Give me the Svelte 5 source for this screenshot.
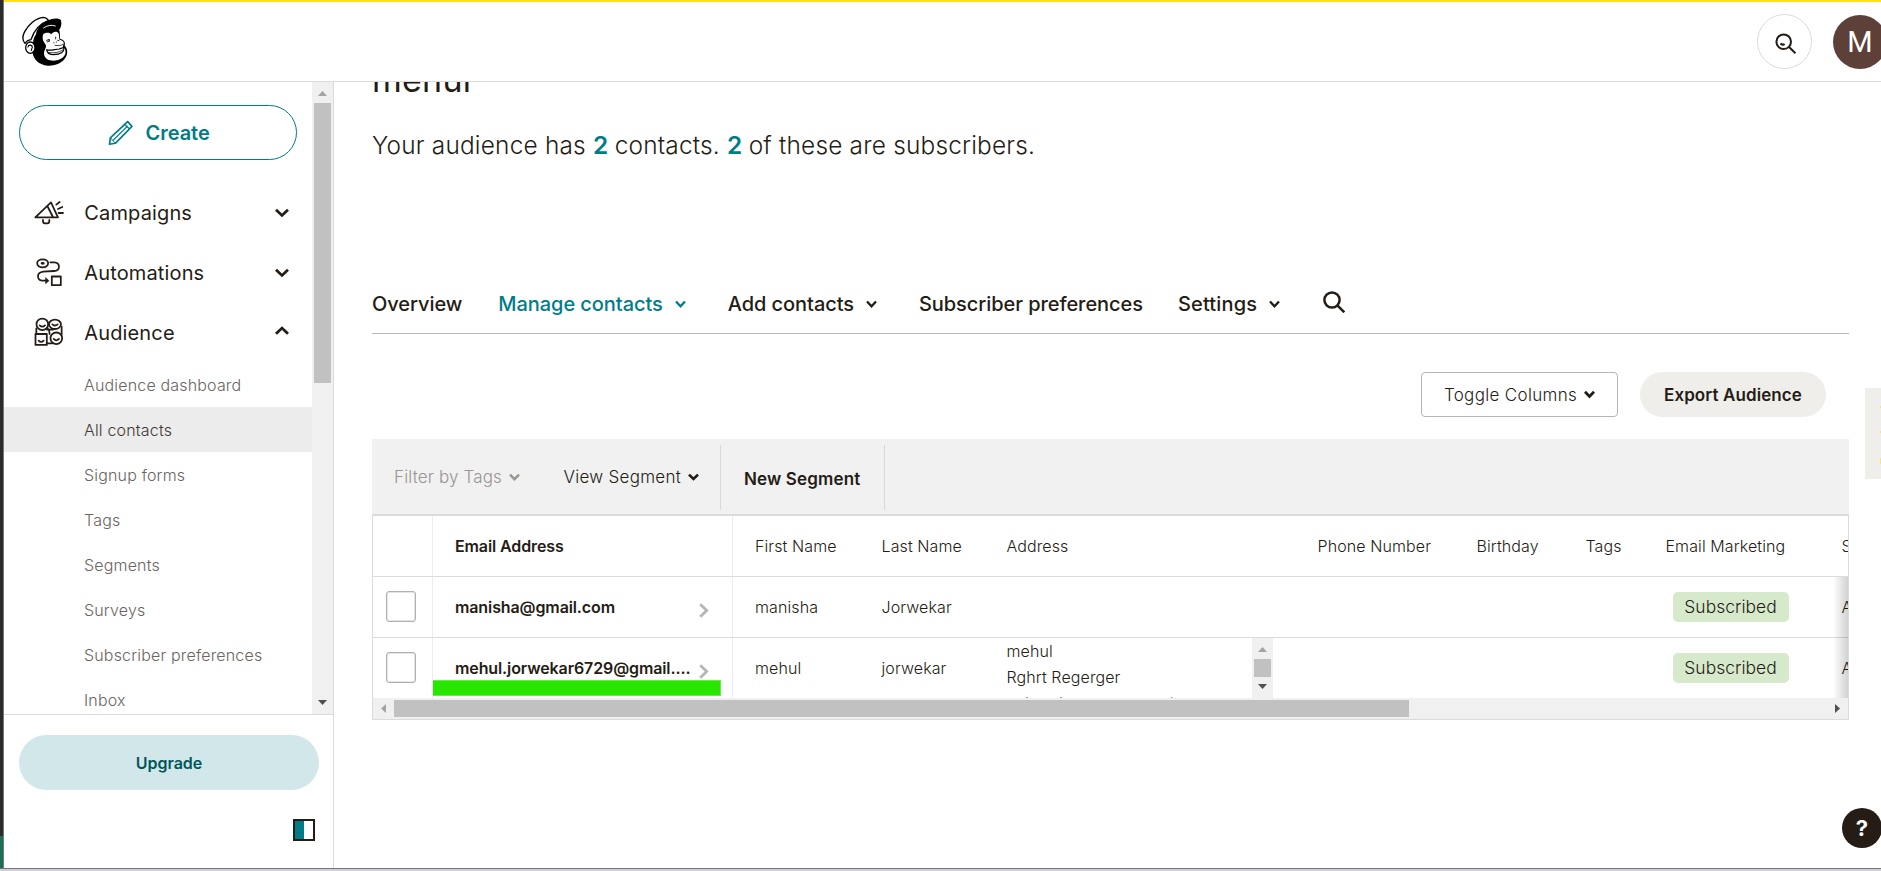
<script>
  const subItems = [
    'Audience dashboard', 'All contacts', 'Signup forms', 'Tags',
    'Segments', 'Surveys', 'Subscriber preferences', 'Inbox'
  ];
  const nav = [
    { id: 'campaigns', label: 'Campaigns' },
    { id: 'automations', label: 'Automations' },
    { id: 'audience', label: 'Audience', open: true }
  ];
  const columns = ['First Name', 'Last Name', 'Address', 'Phone Number', 'Birthday', 'Tags', 'Email Marketing', 'Source'];
  const rows = [
    { email: 'manisha@gmail.com', first: 'manisha', last: 'Jorwekar', address: [] },
    { email: 'mehul.jorwekar6729@gmail....', first: 'mehul', last: 'jorwekar', address: ['mehul', 'Rghrt Regerger'] }
  ];
</script>

{#snippet chevron(w, h, sw)}
  <svg class="chev" width={w} height={h} viewBox="0 0 {w} {h}" fill="none" stroke="currentColor" stroke-width={sw}>
    <path d="M1 {sw / 2 + 0.3}L{w / 2} {h - sw * 0.75}L{w - 1} {sw / 2 + 0.3}" />
  </svg>
{/snippet}

<div class="frame">
  <div class="middle">
    <div class="edge"><i></i></div>
    <div class="app">
      <header>
        <svg class="logo" width="50" height="53.33" viewBox="60 45 150 160" fill="none" stroke="#000" stroke-width="4" stroke-linejoin="round" stroke-linecap="round">
          <path fill="#000" stroke="none" d="M99 128C101 108 112 92 135 84L176 84C180 95 180 105 180 116C192 119 197 127 194 137C202 144 204 157 199 168C190 188 168 198 143 197C118 195 102 180 98 160Z" />
          <path fill="#fff" stroke="none" d="M130 103C138 96 150 98 154 103C159 94 172 92 176 101C179 109 176 116 179 119C189 121 193 126 191 132C189 138 188 139 190 143C198 146 198 160 194 166C185 180 165 185 150 181C132 176 128 160 136 146C140 138 138 134 133 128C127 120 127 108 130 103Z" />
          <path fill="#fff" stroke-width="3.4" d="M140 149C150 154 166 147 178 147C183 145 188 144 191 142C194 156 181 164 161 164C149 164 141 159 140 149Z" />
          <path stroke-width="2.2" d="M146 157C160 160 177 158 188 150M165 136C173 138 184 137 190 133" />
          <path stroke-width="2.4" d="M139 121L149 119M141 126L150 123L145 119M167 111V117M161 128H162M169 126H170M173 121L177 122" />
          <ellipse cx="91" cy="143" rx="14" ry="17" fill="#fff" />
          <path stroke-width="3.4" d="M84 141C85 133 97 134 97 142C97 146 93 147 94 151" />
          <path fill="#fff" d="M75 130C67 121 67 108 74 95C85 75 106 54 130 52C138 52 142 56 146 61C122 70 102 90 93 119C86 120 79 124 75 130Z" />
          <path fill="#000" stroke="none" d="M140 64C152 54 178 52 183 61C186 74 183 85 176 91C162 92 164 98 150 96C140 92 124 96 108 102C110 88 122 72 140 64Z" />
          <path stroke="#fff" stroke-width="3" d="M131 84C141 76 156 74 166 78" />
        </svg>
        <div class="right">
          <span class="search"><svg width="24" height="24" viewBox="0 0 24 24" fill="none" stroke="#241c15" stroke-width="2"><circle cx="9.7" cy="9.7" r="7.3" /><path d="M14.8 14.8L21.4 21.2M6.4 11.6Q9 13.4 10.6 12" /></svg></span>
          <span class="avatar">M</span>
        </div>
      </header>
      <div class="body">
        <aside>
          <div class="scroll">
            <div class="menu">
              <button class="create">
                <svg width="27.3" height="27.3" viewBox="322 354 82 82" fill="none" stroke="currentColor" stroke-width="5" stroke-linejoin="round">
                  <path d="M329.500 430L332 411L384 362L397 376L347 427Z" /><path stroke-width="3.6" d="M340 418L384 375M374 369L390 384" /><path stroke-width="3" d="M333 411L347 427" />
                </svg>Create
              </button>
              <nav>
                {#each nav as item}
                  <div class="item">
                    {#if item.id === 'campaigns'}
                      <svg width="33.3" height="34" viewBox="100 48 100 102"><path d="M107 112L154 67L175 112ZM143 78L160 111M130 120V124Q130 130 136 130H143Q149 130 149 124V120M170 74L180 66M175 87L188 81M177 99H190" /></svg>
                    {:else if item.id === 'automations'}
                      <svg width="33.3" height="34" viewBox="100 228 100 102"><ellipse cx="129" cy="250" rx="16.500" ry="12" /><ellipse cx="129" cy="250" rx="3.500" ry="1.200" /><path d="M152 247H164Q178 248 178 260Q178 272 163 273L131 275Q115 277 115 289Q115 301 128 302H140" /><path class="solid" d="M137 291L149 302L137 313Z" /><rect x="156.500" y="289.500" width="27" height="26" /></svg>
                    {:else}
                      <svg width="33.3" height="34" viewBox="100 408 100 102"><circle cx="128" cy="433" r="17.500" /><ellipse cx="166" cy="433" rx="18" ry="14" /><rect x="107.500" y="462" width="34" height="33" /><circle cx="170" cy="475" r="17.500" /><path d="M120 436Q128 444 136 436M158 433Q166 440 174 433M117 482Q124 490 132 482M162 477Q170 485 178 477M110 445V462M186 440V464M143 444Q150 450 150 462M142 449H160M141 490H158" /></svg>
                    {/if}
                    <span>{item.label}</span>
                    <b class:up={item.open}>{@render chevron(14, 9.500, 2.800)}</b>
                  </div>
                {/each}
              </nav>
              <ul>
                {#each subItems as s}<li class:active={s === 'All contacts'}>{s}</li>{/each}
              </ul>
            </div>
            <div class="vbar">
              <svg width="9" height="5" viewBox="0 0 9 5"><path fill="#a3a3a3" d="M0 5L4.500 0L9 5Z" /></svg>
              <i></i>
              <svg width="9" height="5" viewBox="0 0 9 5"><path fill="#505050" d="M0 0L4.500 5L9 0Z" /></svg>
            </div>
          </div>
          <div class="foot">
            <button class="upgrade">Upgrade</button>
            <span class="panel"><i></i></span>
          </div>
        </aside>
        <main>
          <h1>mehul</h1>
          <p class="lead">Your audience has <b>2</b> contacts. <b>2</b> of these are subscribers.</p>
          <div class="tabs">
            <span>Overview</span>
            <span class="on">Manage contacts {@render chevron(11, 8, 2.300)}</span>
            <span>Add contacts {@render chevron(11, 8, 2.300)}</span>
            <span>Subscriber preferences</span>
            <span class="set">Settings {@render chevron(11, 8, 2.300)}</span>
            <svg class="find" width="22" height="22" viewBox="0 0 22 22" fill="none" stroke="#241c15" stroke-width="2.500"><circle cx="9" cy="9" r="7.600" /><path d="M14.400 14.400L21.300 21.300" /></svg>
          </div>
          <div class="actions">
            <button class="toggle">Toggle Columns {@render chevron(11, 8.500, 2.800)}</button>
            <button class="export">Export Audience</button>
          </div>
          <div class="filters">
            <span class="f1">Filter by Tags {@render chevron(11, 8, 2.500)}</span>
            <span class="f2">View Segment {@render chevron(11, 8, 2.700)}</span>
            <span class="f3">New Segment</span>
          </div>
          <div class="table">
            <div class="row head">
              <div></div>
              <div class="email">Email Address</div>
              {#each columns as c}<div>{c}</div>{/each}
            </div>
            {#each rows as r}
              <div class="row">
                <div class="check"><i></i></div>
                <div class="email"><span>{r.email}</span><svg width="10" height="15" viewBox="0 0 10 15" fill="none" stroke="#b5b5b5" stroke-width="2.800"><path d="M1.200 1.200L7.700 7.500L1.200 13.800" /></svg></div>
                <div>{r.first}</div>
                <div>{r.last}</div>
                <div class="addr">
                  {#if r.address.length}
                    <div class="lines">
                      {#each r.address as line}<span>{line}</span>{/each}
                      <svg width="170" height="1" viewBox="0 0 170 1"><path fill="#999" d="M19 0h2v1h-2zM53 0h2v1h-2zM164 0h1.500v1h-1.500z" /></svg>
                    </div>
                    <div class="vbar small">
                      <svg width="9" height="5" viewBox="0 0 9 5"><path fill="#a3a3a3" d="M0 5L4.500 0L9 5Z" /></svg>
                      <i></i>
                      <svg width="9" height="5" viewBox="0 0 9 5"><path fill="#505050" d="M0 0L4.500 5L9 0Z" /></svg>
                    </div>
                  {/if}
                </div>
                <div></div><div></div><div></div>
                <div class="status"><em>Subscribed</em></div>
                <div>Admin Add</div>
              </div>
            {/each}
            <div class="hbar">
              <svg width="5" height="9" viewBox="0 0 5 9"><path fill="#a3a3a3" d="M5 0L0 4.500L5 9Z" /></svg>
              <i></i>
              <svg width="5" height="9" viewBox="0 0 5 9"><path fill="#505050" d="M0 0L5 4.500L0 9Z" /></svg>
            </div>
            <div class="shade"></div>
            <div class="marker"></div>
          </div>
        </main>
      </div>
    </div>
  </div>
  <div class="bottom"></div>
  <div class="feedback"><svg width="16" height="91" viewBox="0 0 16 91"><path fill="#f3e96b" d="M15 18h1v2h-1zM15 43h1v2h-1zM15 70h1v6h-1z" /></svg></div>
  <div class="help">?</div>
</div>

<style>
  :global(body) { margin: 0; background: #fff; }
  .frame { position: relative; width: 1881px; height: 871px; overflow: hidden; display: flex; flex-direction: column; font-family: Inter, "Liberation Sans", sans-serif; color: #241c15; background: #fff; }
  .frame :global(*) { box-sizing: border-box; }
  button { font: inherit; color: inherit; border: 0; background: none; padding: 0; margin: 0; display: flex; align-items: center; justify-content: center; }
  svg { display: block; flex: none; }
  .middle { display: flex; height: 868px; }
  .edge { width: 4px; background: #2b2b2b; border-right: 1px solid #777; display: flex; align-items: flex-end; }
  .edge i { width: 3px; height: 32px; background: #1a7350; }
  .bottom { height: 3px; background: #d3cfda; border-top: 1px solid #767676; }
  .app { flex: 1; display: flex; flex-direction: column; border-top: 2px solid #ffe01b; min-width: 0; }
  header { height: 80px; border-bottom: 1px solid #dbdbdb; display: flex; justify-content: space-between; align-items: flex-start; padding: 12px 0 0 16px; flex: none; }
  .logo { margin-top: 1px; }
  .right { display: flex; gap: 21px; margin-right: -6px; }
  .search { width: 55px; height: 55px; border: 1px solid #dbdbdb; border-radius: 50%; padding: 17px 0 0 16px; }
  .avatar { width: 54px; height: 54px; margin-top: .5px; border-radius: 50%; background: #5d4037; color: #fff; font: 400 29px/54px Roboto, sans-serif; text-align: center; }
  .body { flex: 1; display: flex; min-height: 0; }
  aside { width: 330px; border-right: 1px solid #dbdbdb; display: flex; flex-direction: column; flex: none; }
  .scroll { height: 632px; display: flex; overflow: hidden; flex: none; }
  .menu { width: 308px; padding-top: 23px; }
  .create { width: 278px; height: 55px; margin-left: 15px; border: 1px solid #007c89; border-radius: 28px; color: #007c89; font-size: 20px; font-weight: 600; gap: 11px; letter-spacing: -.05px; padding-left: 1px; }
  nav { margin-top: 23px; }
  .item { height: 60px; display: flex; align-items: center; padding-left: 29.300px; font-size: 20px; font-weight: 370; }
  .item span { margin-left: 17.700px; width: 191px; letter-spacing: .14px; }
  .item > svg { fill: none; stroke: #241c15; stroke-width: 5.300; stroke-linejoin: round; stroke-linecap: round; }
  .item .solid { fill: #241c15; stroke: none; }
  .item b { margin-top: 0; }
  .item .up { transform: scaleY(-1); margin-top: -4px; }
  ul { list-style: none; margin: -1px 0 0; padding: 0; }
  li { height: 45px; line-height: 46px; padding: 0 0 0 80px; font-size: 16px; font-weight: 350; letter-spacing: .17px; color: #6b645f; white-space: nowrap; }
  li.active { background: #ececec; color: #3f3833; }
  .vbar { width: 21px; background: #f0f0f0; display: flex; flex-direction: column; align-items: center; padding: 9px 0 9px; }
  .vbar i { width: 17px; height: 280px; margin-top: 7px; margin-bottom: auto; background: #c1c1c1; }
  .foot { border-top: 1px solid #dbdbdb; padding: 20px 15px 0; display: flex; flex-direction: column; }
  .upgrade { height: 55px; width: 300px; border-radius: 28px; background: #d2e7e9; color: #00565b; font-size: 16px; font-weight: 600; }
  .panel { align-self: flex-end; width: 22px; height: 22px; border: 2px solid #241c15; margin: 29px 3px 0 0; display: flex; }
  .panel i { width: 9px; background: #007c89; }
  main { padding-left: 38px; width: 1515px; overflow: hidden; }
  h1 { margin: -22px 0 0; height: 40px; line-height: 40px; font-size: 34px; font-weight: 400; letter-spacing: .25px; }
  .lead { margin: 29px 0 0; height: 32px; line-height: 32px; font-size: 24.400px; font-weight: 360; letter-spacing: .2px; }
  .lead b { color: #007c89; font-weight: 600; letter-spacing: -.5px; }
  .tabs { margin-top: 113px; height: 60px; border-bottom: 1px solid #b9b9b9; display: flex; align-items: center; font-size: 20px; font-weight: 500; letter-spacing: -.06px; gap: 36px; color: #241c15; white-space: nowrap; }
  .tabs span { display: flex; align-items: center; gap: 12px; }
  .tabs .on { color: #007c89; }
  .tabs .set { letter-spacing: .15px; }
  .tabs span:nth-child(2) { margin-right: 6px; }
  .tabs span:nth-child(3) { margin-right: 6px; }
  .tabs span:nth-child(4) { margin-right: -1px; }
  .tabs .find { margin: -4px 0 0 7px; }
  .actions { display: flex; justify-content: flex-end; gap: 22px; padding-right: 23px; margin-top: 38px; font-size: 17px; }
  .toggle { width: 197px; height: 45px; border: 1px solid #b5b5b5; border-radius: 4px; gap: 7px; font-weight: 360; letter-spacing: .32px; }
  .export { width: 186px; height: 45px; border-radius: 23px; background: #efeeea; font-weight: 600; letter-spacing: .1px; }
  .filters { margin-top: 22px; height: 75px; background: #f1f1f1; display: flex; padding: 6px 0 4px 22px; font-size: 17px; white-space: nowrap; }
  .filters span { display: flex; align-items: center; gap: 7px; }
  .f1 { width: 169.500px; color: #999591; font-weight: 360; letter-spacing: .14px; }
  .f2 { width: 157px; font-weight: 360; letter-spacing: .28px; border-right: 1px solid #d8d8d8; }
  .f3 { width: 164.500px; padding: 3px 0 0 23.500px; font-weight: 600; border-right: 1px solid #d8d8d8; letter-spacing: .15px; }
  .filters .f1, .filters .f2 { padding-bottom: 1px; }
  .table { position: relative; border: 1px solid #dbdbdb; border-top-width: 2px; height: 206px; overflow: hidden; }
  .row { display: grid; grid-template-columns: 59px 300px 127px 125px 311px 159px 109px 80px 176px 120px; height: 61px; border-bottom: 1px solid #dbdbdb; font-size: 16px; font-weight: 360; white-space: nowrap; letter-spacing: .1px; }
  .row > div { display: flex; align-items: center; padding-left: 22.500px; height: 60px; }
  .row > div:nth-child(2), .row > div:nth-child(3) { border-left: 1px solid #ececec; padding-left: 22px; }
  .row .email { font-weight: 600; justify-content: space-between; padding-right: 23px; letter-spacing: -.11px; }
  .email svg { margin-top: 6px; }
  .row > .check { padding: 0 0 1px 13px; }
  .check i { width: 30px; height: 31px; border: 1px solid #b0b0b0; box-shadow: inset 0 0 0 .5px #ccc; border-radius: 3px; }
  .row .addr { align-items: stretch; overflow: hidden; }
  .lines { width: 245.500px; display: flex; flex-direction: column; padding-top: 0; }
  .lines span { line-height: 26px; height: 26px; }
  .lines svg { margin-top: 7px; }
  .vbar.small { padding: 9px 0; height: 60px; }
  .vbar.small i { height: 18px; }
  .row > .status { padding-left: 29.500px; }
  em { font-style: normal; height: 30px; line-height: 30px; width: 116px; text-align: center; border-radius: 5px; background: #d7e9cb; font-size: 17.400px; letter-spacing: .05px; }
  .hbar { position: relative; height: 21px; margin-top: -1px; background: #f0f0f0; display: flex; align-items: center; padding: 0 8px; }
  .hbar i { width: 1015px; height: 17px; background: #c1c1c1; margin: 0 auto 0 8px; }
  .shade { position: absolute; right: 0; top: 61px; width: 15px; height: 121px; background: linear-gradient(to right, transparent, rgba(0, 0, 0, .18)); }
  .marker { position: absolute; left: 60px; top: 164px; width: 288px; height: 16px; background: #29e600; border: 1px solid #62ee45; border-left: 0; }
  .feedback { position: absolute; right: 0; top: 388px; width: 16px; height: 91px; background: #efeeea; }
  .help { position: absolute; left: 1842px; top: 808px; width: 40px; height: 40px; border-radius: 50%; background: #241c15; color: #fff; font-size: 22px; font-weight: 700; line-height: 40px; text-align: center; }
</style>
